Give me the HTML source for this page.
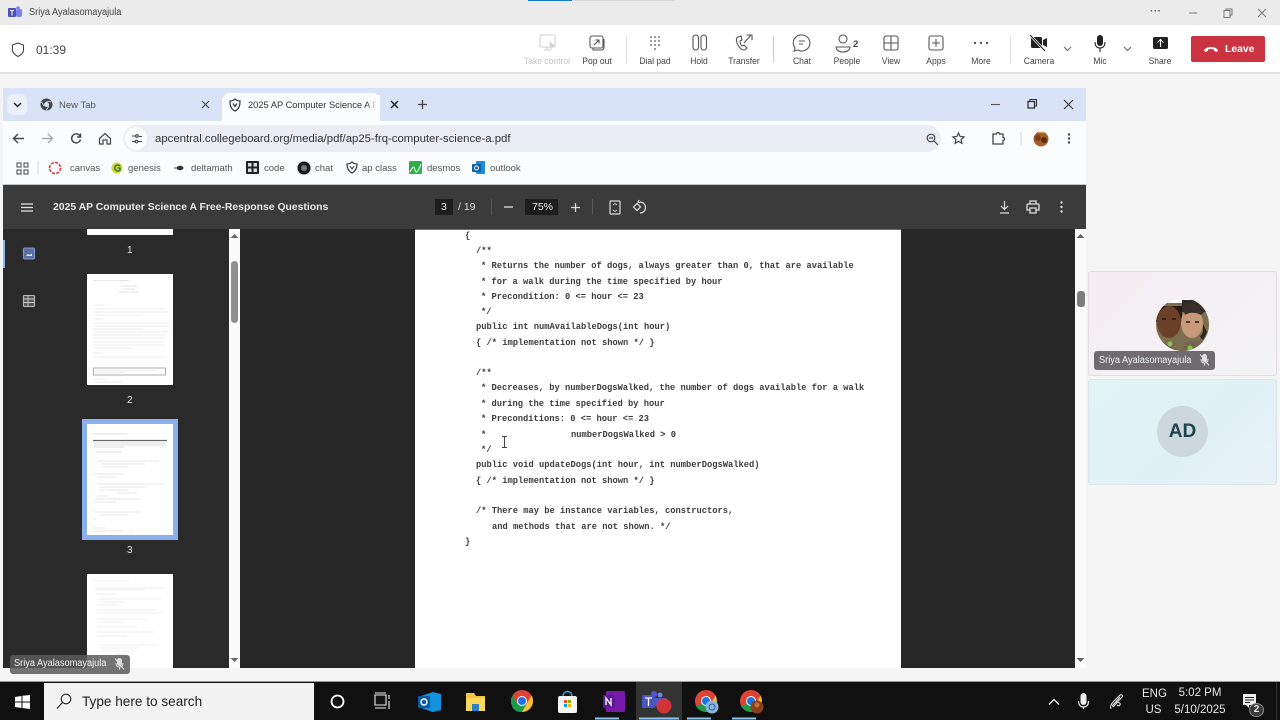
<!DOCTYPE html>
<html><head><meta charset="utf-8"><style>
html,body{margin:0;padding:0;width:1280px;height:720px;overflow:hidden;background:#f5f5f5;font-family:"Liberation Sans",sans-serif}
.a{position:absolute}
.t{position:absolute;white-space:nowrap}
.n{transform:scaleX(.95);transform-origin:0 50%}
.lb{position:absolute;font-size:9.5px;color:#424242;top:56px;transform:translateX(-50%) scaleX(.9);white-space:nowrap}
.m{position:absolute;left:0;font:bold 8.75px/12px "Liberation Mono",monospace;color:#3c3c3c;white-space:pre;filter:blur(.3px)}
svg{position:absolute;overflow:visible}
.bm{position:absolute;top:163px;font-size:9.5px;color:#555;white-space:nowrap}
</style></head><body>
<!-- title bar -->
<div class="a" style="left:0;top:0;width:1280px;height:25px;background:#ebebeb"></div>
<div class="a" style="left:528px;top:0;width:44px;height:1px;background:#0f78d4"></div>
<div class="a" style="left:572px;top:0;width:103px;height:1px;background:#d8d8d8"></div>
<svg style="left:8px;top:6px" width="14" height="12"><rect x="0" y="2" width="8" height="9" rx="1" fill="#4b53bc"/><rect x="8" y="3" width="6" height="8" rx="2" fill="#7b83eb"/><circle cx="10" cy="2" r="1.8" fill="#7b83eb"/><path d="M2 4.500h4M4 4.500v5" stroke="#fff" stroke-width="1"/></svg>
<div class="t n" style="left:29px;top:7px;font-size:9.7px;color:#444">Sriya Ayalasomayajula</div>
<div class="t" style="left:1150px;top:6px;font-size:10px;color:#555;letter-spacing:.5px;font-weight:bold">···</div>
<svg style="left:1188px;top:8px" width="84" height="12" fill="none" stroke="#777" stroke-width="1"><path d="M1 5h8"/><rect x="36" y="2.500" width="6" height="7" /><path d="M38 2.500V1h6v6h-2"/><path d="M70 1l8 8M78 1l-8 8"/></svg>
<!-- meeting toolbar -->
<div class="a" style="left:0;top:25px;width:1280px;height:47px;background:#fff;border-bottom:2px solid #e2e2e2;border-top:1px solid #e6e6e6;box-sizing:content-box;margin-top:-1px"></div>
<svg style="left:11px;top:42px" width="14" height="16" fill="none" stroke="#444" stroke-width="1.100"><path d="M7 1l5.500 2v5c0 3-2.500 5-5.500 6.500C4 13 1.500 11 1.500 8V3z"/></svg>
<div class="t" style="left:36px;top:43px;font-size:12px;color:#444">01:39</div>
<div class="lb" style="left:547px;color:#c4c4c4">Take control</div>
<div class="lb" style="left:597px">Pop out</div>
<div class="lb" style="left:655px">Dial pad</div>
<div class="lb" style="left:699px">Hold</div>
<div class="lb" style="left:744px">Transfer</div>
<div class="lb" style="left:802px">Chat</div>
<div class="lb" style="left:847px">People</div>
<div class="lb" style="left:891px">View</div>
<div class="lb" style="left:936px">Apps</div>
<div class="lb" style="left:981px">More</div>
<div class="lb" style="left:1039px">Camera</div>
<div class="lb" style="left:1100px">Mic</div>
<div class="lb" style="left:1160px">Share</div>
<div class="a" style="left:626px;top:36px;width:1px;height:27px;background:#ddd"></div>
<div class="a" style="left:773px;top:36px;width:1px;height:27px;background:#ccc"></div>
<div class="a" style="left:1010px;top:36px;width:1px;height:27px;background:#ddd"></div>
<svg style="left:0;top:0" width="1280" height="72" fill="none" stroke="#555" stroke-width="1.100">
<rect x="540" y="35" width="15" height="12" rx="1.500" stroke="#d0d0d0"/><path d="M544 50h7M547 47v3" stroke="#d0d0d0"/><path d="M549 41l6 5-3 1-1 3z" fill="#d0d0d0" stroke="none"/>
<rect x="590" y="36" width="13" height="12" rx="2"/><path d="M593 48v2h8c2 0 3-1 3-3v-8" /><path d="M594 45l5-5M595.500 40H599v3.500"/>
<g fill="#555" stroke="none"><circle cx="651" cy="37" r=".9"/><circle cx="655" cy="37" r=".9"/><circle cx="659" cy="37" r=".9"/><circle cx="651" cy="41" r=".9"/><circle cx="655" cy="41" r=".9"/><circle cx="659" cy="41" r=".9"/><circle cx="651" cy="45" r=".9"/><circle cx="655" cy="45" r=".9"/><circle cx="659" cy="45" r=".9"/><circle cx="655" cy="49" r=".9"/></g>
<rect x="693" y="35" width="5.500" height="15" rx="2.700"/><rect x="701" y="35" width="5.500" height="15" rx="2.700"/>
<path d="M738 37c-2 1-2 3-1 6 1 3 4 7 7 7 1 0 2-1 3-2l-3-3-2 1c-1-1-2-3-2-5l2-1-1-4z"/><path d="M744 43l7-8M746.500 35H752v5"/>
<path d="M802 35a8 8 0 1 1-4 15c-1 0-2 1-4 1 1-1 1-2 1-3a8 8 0 0 1 7-13z"/><path d="M799 41h6M799 44h4"/>
<circle cx="843" cy="39" r="4"/><path d="M836 47h14c0 3-3 5-7 5s-7-2-7-5z"/>
<rect x="884" y="36" width="14" height="14" rx="2"/><path d="M891 36v14M884 43h14"/>
<rect x="929" y="36" width="14" height="14" rx="2"/><path d="M936 39v8M932 43h8"/>
<g fill="#555" stroke="none"><circle cx="975" cy="43" r="1.200"/><circle cx="981" cy="43" r="1.200"/><circle cx="987" cy="43" r="1.200"/></g>
<rect x="1031" y="37" width="11" height="11" rx="1.500" fill="#222" stroke="none"/><path d="M1043 40l4-2v9l-4-2z" fill="#222" stroke="none"/><path d="M1030 35l15 16" stroke="#fff" stroke-width="2.500"/><path d="M1030 35l15 16" stroke="#222"/>
<path d="M1064 47l3.500 3.500 3.500-3.500M1124 47l3.500 3.500 3.500-3.500" stroke="#666"/>
<rect x="1097" y="35" width="6" height="11" rx="3" fill="#222" stroke="none"/><path d="M1095 42c0 4 2 6 5 6s5-2 5-6M1100 48v4" stroke="#222"/>
<rect x="1153" y="37" width="15" height="12" rx="1.500" fill="#222" stroke="none"/><path d="M1160.500 47v-7M1157.500 42.500l3-3 3 3" stroke="#fff"/>
</svg>
<div class="t" style="left:853px;top:39px;font-size:9.500px;font-weight:bold;color:#444">2</div>
<div class="a" style="left:1191px;top:36px;width:74px;height:26px;background:#cc3340;border-radius:2px"></div>
<svg style="left:1203px;top:44px" width="16" height="10"><path d="M1 6c3-4 11-4 14 0l-1 2-3-1V5.500c-2-.6-4-.6-6 0V7L2 8z" fill="#fff"/></svg>
<div class="t" style="left:1225px;top:44px;font-size:10.400px;font-weight:bold;color:#fff">Leave</div>

<!-- browser -->
<div class="a" style="left:3px;top:88px;width:1083px;height:33px;background:#d9e3f7"></div>
<div class="a" style="left:3px;top:121px;width:1083px;height:64px;background:#fbfcfe"></div>
<div class="a" style="left:7px;top:94px;width:20px;height:21px;background:#e9effb;border-radius:6px"></div>
<svg style="left:13px;top:102px" width="9" height="6" fill="none" stroke="#222" stroke-width="1.500"><path d="M1 1l3.500 3.500L8 1"/></svg>
<svg style="left:40px;top:98px" width="13" height="13"><circle cx="6.500" cy="6.500" r="6" fill="#444"/><circle cx="6.500" cy="6.500" r="2.500" fill="#d9e3f7"/><path d="M6.500 3.500h5M4 8l-2.500-4M9 8l-3 4.500" stroke="#d9e3f7" stroke-width=".8"/></svg>
<div class="t" style="left:59px;top:100px;font-size:9.500px;color:#555">New Tab</div>
<svg style="left:201px;top:100px" width="9" height="9" stroke="#444" stroke-width="1.100"><path d="M1 1l7 7M8 1l-7 7"/></svg>
<div class="a" style="left:222px;top:93px;width:158px;height:28px;background:#fbfcfe;border-radius:8px 8px 0 0"></div>
<svg style="left:229px;top:98px" width="12" height="14" fill="none" stroke="#333" stroke-width="1.200"><path d="M1 3c3 0 4-1 5-2 1 1 2 2 5 2 0 5-1 8-5 10C2 11 1 8 1 3z"/><path d="M4 5.500l2 3 2-3"/></svg>
<div class="t" style="left:248px;top:100px;font-size:9.300px;color:#333;width:132px;overflow:hidden">2025 AP Computer Science A Fr</div>
<div class="a" style="left:366px;top:95px;width:14px;height:20px;background:linear-gradient(90deg,rgba(251,252,254,0),#fbfcfe 80%)"></div>
<svg style="left:390px;top:100px" width="9" height="9" stroke="#222" stroke-width="1.500"><path d="M1 1l7 7M8 1l-7 7"/></svg>
<svg style="left:418px;top:100px" width="9" height="9" stroke="#444" stroke-width="1.300"><path d="M4.500 0v9M0 4.500h9"/></svg>
<svg style="left:990px;top:98px" width="85" height="13" fill="none" stroke="#333" stroke-width="1.100"><path d="M1 6.500h9" stroke="#555"/><rect x="38" y="3.500" width="6.500" height="6.500" stroke-width="1.300"/><path d="M40 3.500V1.500h6.500V8h-2" stroke-width="1.100"/><path d="M74 2l9 9M83 2l-9 9"/></svg>
<svg style="left:0;top:0" width="1280" height="185" fill="none" stroke="#444" stroke-width="1.400">
<path d="M14 138.500h10M18 134l-4.500 4.500 4.500 4.500"/>
<path d="M42 138.500h10M48 134l4.500 4.500-4.500 4.500" stroke="#a8a8a8"/>
<path d="M80 136a4.500 4.500 0 1 0 .5 3.500M80.500 133.500v3.500h-3.500"/>
<path d="M99.500 138.500l5.500-5 5.500 5v5.500h-3.500v-4h-4v4h-3.500z" stroke-width="1.200"/>
</svg>
<div class="a" style="left:123px;top:125px;width:818px;height:27px;background:#eaedf4;border-radius:14px"></div>
<div class="a" style="left:125px;top:127px;width:22px;height:23px;background:#fbfcfe;border-radius:12px"></div>
<svg style="left:131px;top:134px" width="12" height="10" stroke="#444" stroke-width="1.100" fill="none"><path d="M1 2h4M8 2.500h3M1 7.500h3M7 7.500h4"/><circle cx="6" cy="2" r="1.300"/><circle cx="5.500" cy="7.500" r="1.300"/></svg>
<div class="t" style="left:155px;top:133px;font-size:11.370px;color:#333">apcentral.collegeboard.org/media/pdf/ap25-frq-computer-science-a.pdf</div>
<svg style="left:0;top:0" width="1280" height="185" fill="none" stroke="#444" stroke-width="1.200">
<circle cx="931" cy="138" r="3.800"/><path d="M934 141l4 4M929 138h4"/>
<path d="M958.500 133l1.600 3.500 3.900.4-2.900 2.600.8 3.800-3.400-2-3.400 2 .8-3.800-2.900-2.600 3.900-.4z"/>
<path d="M993 134h3.500a1.500 1.500 0 0 1 3 0h3.500v3.500a1.500 1.500 0 0 1 0 3v3.500h-10z" stroke-width="1.300"/>
<path d="M1021 132v13" stroke="#ddd"/>
<g fill="#444" stroke="none"><circle cx="1069" cy="134.500" r="1.200"/><circle cx="1069" cy="138.500" r="1.200"/><circle cx="1069" cy="142.500" r="1.200"/></g>
<circle cx="1041" cy="139" r="7.500" fill="#a85a2a" stroke="none"/><circle cx="1038" cy="138" r="3" fill="#7a3d1c" stroke="none"/><circle cx="1044" cy="140" r="3" fill="#5a2d14" stroke="none"/><path d="M1038 132h6" stroke="#e8d97a"/>
</svg>
<!-- bookmarks -->
<svg style="left:0;top:0" width="560" height="185" fill="none">
<g stroke="#444" stroke-width="1"><rect x="17" y="163" width="4" height="4"/><rect x="24" y="163" width="4" height="4"/><rect x="17" y="170" width="4" height="4"/><rect x="24" y="170" width="4" height="4"/></g>
<path d="M38 161v13" stroke="#ddd"/>
<circle cx="55" cy="168" r="5.500" stroke="#d63a3a" stroke-width="1.600" stroke-dasharray="3 1.300"/>
<circle cx="117" cy="168" r="5.500" fill="#c9d83a"/><path d="M120 166a3 3 0 1 0 0 4v-2h-2.500" stroke="#1d6b34" stroke-width="1.300"/>
<ellipse cx="180" cy="168" rx="3.500" ry="2.200" fill="#333"/><path d="M174 168h3" stroke="#555"/>
<rect x="246" y="161" width="13" height="13" rx="1" fill="#222"/><g fill="#ddd"><rect x="248" y="163" width="3.500" height="3.500"/><rect x="253.500" y="163" width="3.500" height="3.500"/><rect x="248" y="168.500" width="3.500" height="3.500"/><rect x="253.500" y="168.500" width="3.500" height="3.500"/></g>
<circle cx="304" cy="168" r="6.500" fill="#1b1b1b"/><circle cx="304" cy="168" r="3" fill="#777"/>
<path d="M347 164c2 0 4-1 5-2 1 1 3 2 5 2 0 4-1 7-5 9-4-2-5-5-5-9z" stroke="#333" stroke-width="1.200"/><path d="M350 166l2 3 2-3" stroke="#333"/>
<rect x="409" y="161" width="13" height="13" rx="1.500" fill="#2fae4a"/><path d="M410 172c3-6 4-6 5-2s3 2 6-6" stroke="#fff" stroke-width="1"/>
<rect x="476" y="161" width="9" height="13" rx="1" fill="#1d8ad6"/><rect x="472" y="164" width="9" height="8" rx="1" fill="#0f5fa8"/><circle cx="476.500" cy="168" r="2" stroke="#fff" stroke-width="1"/>
</svg>
<div class="bm" style="left:70px">canvas</div>
<div class="bm" style="left:128px">genesis</div>
<div class="bm" style="left:191px">deltamath</div>
<div class="bm" style="left:264px">code</div>
<div class="bm" style="left:315px">chat</div>
<div class="bm" style="left:362px">ap class</div>
<div class="bm" style="left:427px">desmos</div>
<div class="bm" style="left:490px">outlook</div>
<!-- pdf toolbar -->
<div class="a" style="left:3px;top:184px;width:1083px;height:1px;background:#c8c8c8"></div>
<div class="a" style="left:3px;top:185px;width:1083px;height:44px;background:#3b3b3b"></div>
<svg style="left:21px;top:203px" width="12" height="9" stroke="#e4e4e4" stroke-width="1.200"><path d="M0 1h12M0 4.500h12M0 8h12"/></svg>
<div class="t" style="left:53px;top:202px;font-size:10.400px;font-weight:bold;color:#e8e8e8">2025 AP Computer Science A Free-Response Questions</div>
<div class="a" style="left:435px;top:199px;width:18px;height:16px;background:#1d1d1d"></div>
<div class="t" style="left:441px;top:201px;font-size:10.500px;color:#eee">3</div>
<div class="t" style="left:458px;top:201px;font-size:10.500px;color:#ddd">/ 19</div>
<div class="a" style="left:491px;top:199px;width:1px;height:16px;background:#5a5a5a"></div>
<svg style="left:504px;top:206px" width="10" height="2"><path d="M0 1h9" stroke="#ddd" stroke-width="1.300"/></svg>
<div class="a" style="left:525px;top:199px;width:33px;height:16px;background:#1d1d1d"></div>
<div class="t" style="left:532px;top:201px;font-size:10.500px;color:#eee">75%</div>
<svg style="left:571px;top:203px" width="9" height="9" stroke="#ddd" stroke-width="1.300"><path d="M4.500 0v9M0 4.500h9"/></svg>
<div class="a" style="left:592px;top:199px;width:1px;height:16px;background:#5a5a5a"></div>
<svg style="left:0;top:185px" width="1086" height="44" fill="none" stroke="#ddd" stroke-width="1.200">
<rect x="610" y="16" width="10" height="13" rx="1"/><path d="M613 20l2-1.500 2 1.500M613 25l2 1.500 2-1.500" stroke-width=".8"/>
<path d="M640 17a5.500 5.500 0 1 1 0 11"/><path d="M639 15l-1 2 2 1"/><rect x="634.500" y="19.500" width="5" height="5" transform="rotate(45 637 22)"/>
<path d="M1004.500 16v8M1001 21l3.500 3.500L1008 21M1000 28h9"/>
<path d="M1030 19v-3h6v3M1028 19h10a1 1 0 0 1 1 1v5h-2.500M1029.500 25H1027v-5a1 1 0 0 1 1-1M1030 23h6v5h-6z" stroke-width="1.300"/>
<g fill="#ddd" stroke="none"><circle cx="1061.500" cy="17.500" r="1.200"/><circle cx="1061.500" cy="22" r="1.200"/><circle cx="1061.500" cy="26.500" r="1.200"/></g>
</svg>
<!-- viewer -->
<div class="a" style="left:3px;top:229px;width:1083px;height:439px;background:#282828;overflow:hidden">
  <div class="a" style="left:0;top:0;width:226px;height:439px;background:#2a2a2a"></div>
  <div class="a" style="left:0;top:11px;width:2px;height:28px;background:#8ab4f8"></div>
</div>
<svg style="left:0;top:0" width="240" height="320" fill="none">
<rect x="23.500" y="248" width="11" height="11" rx="1.500" fill="#5a6f9a" stroke="#7d9bd8" stroke-width="1.100"/><path d="M26 256l2-2 1.500 1 2.500-1.500v2.500z" fill="#dfe8fa"/>
<rect x="23.500" y="295.500" width="11" height="11" rx="1" stroke="#bbb" stroke-width="1.100" fill="#555"/><path d="M28 296v10M24 299h10M24 302.500h10" stroke="#ccc" stroke-width=".9"/>
</svg>
<!-- thumbnails -->
<div class="a" style="left:87px;top:229px;width:86px;height:6px;background:#fff"></div>
<div class="t" style="left:127px;top:245px;font-size:10px;color:#e6e6e6">1</div>
<div class="a" style="left:87px;top:274px;width:86px;height:111px;background:#fff"></div>
<svg style="left:87px;top:274px" width="86" height="111" stroke-width=".6" fill="none">
<path d="M6 6.500h36M34 12h16M36 15h12M32 18h20" stroke="#ccc"/>
<path d="M6 31h12M6 35h72M6 38h76M6 41h50M6 45h10M6 49h76M6 52h76M6 55h50M6 58h76M6 61h74M6 64h72M6 68h70M6 71h74M6 74h40M6 79h10M6 83h74" stroke="#dcdcdc"/>
<rect x="6.500" y="94" width="72" height="7" stroke="#999" stroke-width=".8"/><path d="M8 96.500h60M8 98.500h30M6 105h14M6 108h30" stroke="#ddd"/>
</svg>
<div class="t" style="left:127px;top:395px;font-size:10px;color:#e6e6e6">2</div>
<div class="a" style="left:82px;top:419px;width:86px;height:111px;background:#fff;border:5px solid #8ab0ee"></div>
<svg style="left:87px;top:424px" width="86" height="111" stroke-width=".6" fill="none">
<path d="M6 10h34" stroke="#bbb"/><path d="M6 16.500h74" stroke="#666" stroke-width="1.300"/><path d="M7 19h72M7 21h72M7 23h30M9 28h26" stroke="#bbb"/>
<path d="M10 37h62M14 40h44M14 43h28M7 50h30M10 53h20M10 60h68M12 63h46M12 66h30M30 69h20M10 72h10M7 75h46M7 78h22M7 88h46M12 91h30M7 95h2" stroke="#d0d0d0"/>
<path d="M6 104h12M6 107h30M42 107h3" stroke="#d0d0d0"/>
</svg>
<div class="t" style="left:127px;top:545px;font-size:10px;color:#e6e6e6">3</div>
<div class="a" style="left:87px;top:574px;width:86px;height:94px;background:#fff"></div>
<svg style="left:87px;top:574px" width="86" height="94" stroke="#e0e0e0" stroke-width=".6" fill="none">
<path d="M6 7h36M8 14h70M8 16h50M8 20h22M10 25h64M14 28h24M10 31h22M10 36h60M10 39h66M10 45h50M12 48h24M10 53h40M10 58h60M10 62h30M12 71h60M14 74h40M14 77h34M28 80h12M10 86h30"/>
</svg>
<!-- sidebar scrollbar -->
<div class="a" style="left:229px;top:229px;width:11px;height:439px;background:#fbfbfb"></div>
<svg style="left:230px;top:233px" width="9" height="6"><path d="M0.500 5L4.500 1l4 4z" fill="#666"/></svg>
<div class="a" style="left:230.500px;top:261px;width:7px;height:62px;background:#8f8f8f;border-radius:4px"></div>
<svg style="left:230px;top:657px" width="9" height="6"><path d="M0.500 1l4 4 4-4z" fill="#666"/></svg>
<!-- pdf page -->
<div class="a" style="left:415px;top:229px;width:486px;height:439px;background:#fff"></div>
<div class="a" style="left:415px;top:229px;width:486px;height:1px;background:#6d6d6d"></div>
<div class="m" style="left:465px;top:230px">{</div>
<div class="m" style="left:476px;top:245px">/**</div>
<div class="m" style="left:481px;top:260px">* Returns the number of dogs, always greater than 0, that are available</div>
<div class="m" style="left:481px;top:276px">* for a walk during the time specified by hour</div>
<div class="m" style="left:481px;top:291px">* Precondition: 0 &lt;= hour &lt;= 23</div>
<div class="m" style="left:481px;top:306px">*/</div>
<div class="m" style="left:476px;top:321px">public int numAvailableDogs(int hour)</div>
<div class="m" style="left:476px;top:337px">{ /* implementation not shown */ }</div>
<div class="m" style="left:476px;top:367px">/**</div>
<div class="m" style="left:481px;top:382px">* Decreases, by numberDogsWalked, the number of dogs available for a walk</div>
<div class="m" style="left:481px;top:398px">* during the time specified by hour</div>
<div class="m" style="left:481px;top:413px">* Preconditions: 0 &lt;= hour &lt;= 23</div>
<div class="m" style="left:481px;top:429px">*</div>
<div class="m" style="left:571px;top:429px">numberDogsWalked &gt; 0</div>
<div class="m" style="left:481px;top:444px">*/</div>
<div class="m" style="left:476px;top:459px">public void updateDogs(int hour, int numberDogsWalked)</div>
<div class="m" style="left:476px;top:475px">{ /* implementation not shown */ }</div>
<div class="m" style="left:476px;top:505px">/* There may be instance variables, constructors,</div>
<div class="m" style="left:492px;top:521px">and methods that are not shown. */</div>
<div class="m" style="left:465px;top:536px">}</div>
<svg style="left:501px;top:436px" width="8" height="13" fill="none" stroke="#444" stroke-width="1"><path d="M1 .5h5M1 11.500h5M3.500 .5v11"/></svg>
<!-- right scrollbar -->
<div class="a" style="left:1075px;top:229px;width:11px;height:439px;background:#fbfbfb"></div>
<svg style="left:1076px;top:233px" width="9" height="6"><path d="M0.500 5L4.500 1l4 4z" fill="#666"/></svg>
<div class="a" style="left:1077px;top:291px;width:8px;height:16px;background:#7d7d7d;border-radius:3px"></div>
<svg style="left:1076px;top:657px" width="9" height="6"><path d="M0.500 1l4 4 4-4z" fill="#666"/></svg>
<!-- name tag left -->
<div class="a" style="left:10px;top:655px;width:120px;height:19px;background:rgba(90,90,90,.85);border-radius:3px"></div>
<div class="t n" style="left:14px;top:658px;font-size:9.700px;color:#f2f2f2">Sriya Ayalasomayajula</div>
<svg style="left:114px;top:657px" width="11" height="14" fill="none" stroke="#ddd" stroke-width="1"><rect x="3.500" y="1.500" width="4" height="7" rx="2" fill="#ddd"/><path d="M2 6c0 3 1.500 4 3.500 4s3.500-1 3.500-4M5.500 10v2.500M1 1.500l9 11"/></svg>
<!-- right panel -->
<div class="a" style="left:1088px;top:271px;width:189px;height:105px;box-sizing:border-box;background:linear-gradient(135deg,#f4edf3,#f4f1f4 60%,#f3f4f5);border:1px solid #e2dde2;border-radius:3px"></div>
<svg style="left:1156px;top:298px" width="54" height="54">
<defs><clipPath id="c"><circle cx="26.500" cy="26.500" r="26.500"/></clipPath></defs>
<g clip-path="url(#c)"><rect width="54" height="54" fill="#7d6e50"/><rect x="0" y="0" width="54" height="5" fill="#fff"/>
<path d="M0 8h26v16H0z" fill="#2a1c15"/><path d="M26 2h28v12H26z" fill="#2f2a26"/>
<ellipse cx="13" cy="24" rx="12" ry="16" fill="#6a4028"/><ellipse cx="36" cy="25" rx="11" ry="15" fill="#c69a7a"/>
<path d="M26 9c6-6 18-5 22 5l-3 3c-5-3-12-3-16 0z" fill="#37302a"/>
<path d="M6 21h4M16 21h4M30 24h4M39 24h4" stroke="#1e1410" stroke-width="1.500"/>
<path d="M0 40l24 14H0z" fill="#6b6045"/><path d="M22 54l12-12 20 2v10z" fill="#72674a"/><circle cx="14" cy="46" r="2.500" fill="#8cc152"/><circle cx="34" cy="50" r="2.500" fill="#8cc152"/><path d="M47 26l4 8-4 8-3-3 3-5z" fill="#2b2320"/></g></svg>
<div class="a" style="left:1094px;top:351px;width:121px;height:19px;background:#6f6b70;border-radius:3px"></div>
<div class="t n" style="left:1099px;top:355px;font-size:9.700px;color:#f4f4f4">Sriya Ayalasomayajula</div>
<svg style="left:1199px;top:353px" width="11" height="14" fill="none" stroke="#e4e4e4" stroke-width="1"><rect x="3.500" y="1.500" width="4" height="7" rx="2" fill="#e4e4e4"/><path d="M2 6c0 3 1.500 4 3.500 4s3.500-1 3.500-4M5.500 10v2.500M1 1.500l9 11"/></svg>
<div class="a" style="left:1088px;top:379px;width:189px;height:106px;box-sizing:border-box;background:linear-gradient(135deg,#e1f3f3,#e0f1f5 60%,#e8f2f7);border:1px solid #dbe6e8;border-radius:3px"></div>
<div class="a" style="left:1157px;top:406px;width:51px;height:51px;border-radius:50%;background:#ccd8de;text-align:center;font-size:19px;line-height:51px;color:#1f4250;font-weight:bold">AD</div>
<!-- bottom strip -->
<div class="a" style="left:0;top:681px;width:1280px;height:1px;background:#9a9a9a"></div>
<div class="a" style="left:0;top:682px;width:1280px;height:38px;background:#101010"></div>
<svg style="left:15px;top:695px" width="15" height="14" fill="#fff"><path d="M0 2l6.500-1v5.500H0zM7.500 .8L15 0v6.500H7.500zM0 7.500h6.500V13L0 12zM7.500 7.500H15V14l-7.500-1z"/></svg>
<div class="a" style="left:44px;top:683px;width:270px;height:37px;background:#f2f2f2"></div>
<svg style="left:56px;top:693px" width="16" height="17" fill="none" stroke="#222" stroke-width="1.100"><circle cx="10" cy="6" r="4.800"/><path d="M6.500 9.500L1 15.500"/></svg>
<div class="t" style="left:82px;top:694px;font-size:13.600px;color:#222">Type here to search</div>
<svg style="left:0;top:682px" width="800" height="38" fill="none">
<circle cx="337.500" cy="19.500" r="6" stroke="#fff" stroke-width="1.800"/>
<path d="M375 13h11v10h-11zM375 11h11M375 26h11M389 13v4M389 19v8" stroke="#eee" stroke-width="1.100"/>
<path d="M421 14l12-4 8 2v16l-8 2-12-4z" fill="#1490df"/><rect x="418" y="14" width="12" height="12" rx="1" fill="#0a5ba6"/><circle cx="424" cy="20" r="3" stroke="#fff" stroke-width="1.400"/>
<path d="M466 11h8l2 3h9v15h-19z" fill="#f4c542"/><rect x="466" y="16" width="19" height="13" fill="#fbd75b"/><rect x="472" y="22" width="7" height="7" fill="#2f7fc4"/>
<circle cx="522" cy="19" r="11" fill="#db4437"/><path d="M512.500 24.500a11 11 0 0 1 0-11L518 23l-2.500 5.500z" fill="#1a9c48"/><path d="M531.500 13.500a11 11 0 0 1-9.500 16.500l5-9z" fill="#fbc02d"/><path d="M512 25a11 11 0 0 0 10 5l5-9-9 1z" fill="#1a9c48"/><circle cx="522" cy="19" r="5" fill="#fff"/><circle cx="522" cy="19" r="4" fill="#1a73e8"/>
<rect x="558" y="14" width="19" height="17" rx="2" fill="#f4f4f4"/><path d="M563 14c0-6 9-6 9 0" stroke="#38a6e6" stroke-width="1.400"/><rect x="564" y="18" width="3" height="3" fill="#f25022"/><rect x="568" y="18" width="3" height="3" fill="#7fba00"/><rect x="564" y="22" width="3" height="3" fill="#00a4ef"/><rect x="568" y="22" width="3" height="3" fill="#ffb900"/>
<rect x="606" y="9" width="19" height="21" rx="1" fill="#7719aa"/><rect x="603" y="13" width="12" height="13" rx="1" fill="#5a1a90"/><path d="M606 23v-7l5 7v-7" stroke="#fff" stroke-width="1.300"/>
<rect x="636" y="0" width="46" height="38" fill="#333"/>
<circle cx="660" cy="13" r="2.500" fill="#7b83eb"/><circle cx="654" cy="12" r="3" fill="#5059c9"/><rect x="642" y="13" width="13" height="13" rx="1" fill="#4b53bc"/><path d="M645 16h7M648.500 16v8" stroke="#fff" stroke-width="1.300"/><path d="M655 16h11v8h-11z" fill="#5059c9"/><circle cx="664" cy="24" r="7.500" fill="#d13438"/>
<circle cx="706" cy="19" r="11" fill="#db4437"/><path d="M696 24a11 11 0 0 0 10 6l5-9-9 1z" fill="#1a9c48"/><path d="M715.500 13.500a11 11 0 0 1-1 12l-3-5z" fill="#fbc02d"/><circle cx="706" cy="19" r="4.500" fill="#1a73e8" stroke="#fff" stroke-width="1"/><circle cx="712" cy="25" r="6.500" fill="#8ab4d8"/><circle cx="712" cy="25" r="3" stroke="#2a5f9e" stroke-width="1"/>
<circle cx="751" cy="19" r="11" fill="#db4437"/><path d="M741 24a11 11 0 0 0 10 6l5-9-9 1z" fill="#1a9c48"/><path d="M760.500 13.500a11 11 0 0 1-1 12l-3-5z" fill="#fbc02d"/><circle cx="751" cy="19" r="4.500" fill="#1a73e8" stroke="#fff" stroke-width="1"/><circle cx="757" cy="25" r="6.500" fill="#8a3f1c"/><circle cx="757" cy="23" r="2.500" fill="#c4763a"/>
<path d="M595 36.500h24M639 36.500h40M687 36.500h24M732 36.500h24" stroke="#8fc4ec" stroke-width="2"/>
</svg>
<svg style="left:1000px;top:682px" width="280" height="38" fill="none" stroke="#eee">
<path d="M49 22.500l5-5 5 5" stroke-width="1.300"/>
<rect x="80.500" y="11" width="6" height="12" rx="3" fill="#eee" stroke="none"/><path d="M78.500 19c0 4 2 6 5 6s5-2 5-6M83.500 25v2" stroke-width="1.200"/>
<path d="M111 27c-1-2 0-5 3-8l6-6c2-1 3 1 2 2l-8 9c-1 1-2 0-1-1l7-8M116 20c2 0 5 1 4 3s-3 0-3 0" stroke-width="1"/>
<path d="M243 12h13v11h-7v3l-3-3h-3z" fill="#eee" stroke="none"/><path d="M245 15.500h9M245 18h9M245 20.500h5" stroke="#222" stroke-width=".9"/>
<path d="M276.500 0v38" stroke="#333"/>
</svg>
<div class="t" style="left:1142px;top:688px;font-size:11.500px;color:#e6e6e6;width:23px;text-align:center">ENG</div>
<div class="t" style="left:1142px;top:704px;font-size:11.500px;color:#e6e6e6;width:23px;text-align:center">US</div>
<div class="t" style="left:1172px;top:687px;font-size:11.500px;color:#e6e6e6;width:56px;text-align:center">5:02 PM</div>
<div class="t" style="left:1172px;top:704px;font-size:11.500px;color:#e6e6e6;width:56px;text-align:center">5/10/2025</div>
<div class="a" style="left:1249px;top:703px;width:15px;height:14px;border-radius:50%;background:#3a3a3a;border:1px solid #888;box-sizing:border-box;text-align:center;font-size:10px;line-height:12px;font-weight:bold;color:#eee">2</div>
</body></html>
